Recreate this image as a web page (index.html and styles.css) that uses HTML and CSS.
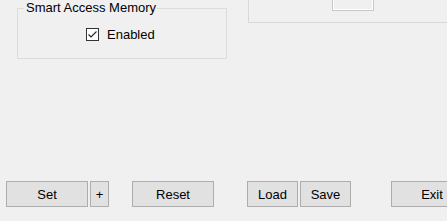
FILE: index.html
```html
<!DOCTYPE html>
<html>
	<head>
		<meta charset="utf-8">
		<title>Settings</title>
		<link rel="stylesheet" href="styles.css">
	</head>
	<body>
		<div class="window">
			<div class="toprow">
				<fieldset class="group">
					<legend>Smart Access Memory</legend>
					<label class="check">
						<span class="box">
							<svg width="11" height="11" viewBox="0 0 11 11"><path d="M1.5 5.5 L4 8 L9.5 2.5" fill="none" stroke="#222" stroke-width="1.1"/></svg>
						</span>
						<span>Enabled</span>
					</label>
				</fieldset>
				<div class="panel">
					<div class="slot"></div>
				</div>
			</div>
			<div class="buttons">
				<button class="btn wide">Set</button>
				<button class="btn plus">+</button>
				<button class="btn wide reset">Reset</button>
				<button class="btn small load">Load</button>
				<button class="btn small save">Save</button>
				<button class="btn wide exit">Exit</button>
			</div>
		</div>
	</body>
</html>
```

FILE: styles.css
```css
html, body {
	margin: 0;
	padding: 0;
	background-color: #f0f0f0;
	overflow: hidden;
}

.window {
	width: 447px;
	height: 221px;
	font-family: "Liberation Sans", Arial, sans-serif;
	font-size: 13px;
	color: #000;
	display: flex;
	flex-direction: column;
	overflow: hidden;
}

.toprow {
	display: flex;
	align-items: flex-start;
}

.group {
	margin: 0 0 0 17px;
	padding: 0;
	width: 208px;
	height: 57px;
	box-sizing: content-box;
	border: 1px solid #dcdcdc;
}

.group legend {
	margin-left: 6px;
	padding: 0 1px 0 2px;
	line-height: 16px;
}

.check {
	display: flex;
	align-items: center;
	margin: 11px 0 0 68px;
}

.box {
	width: 11px;
	height: 11px;
	border: 1px solid #333;
	background-color: #fff;
	display: flex;
}

.check span + span {
	margin-left: 8px;
}

.panel {
	margin-left: 21px;
	flex: 1;
	height: 22px;
	border-left: 1px solid #d9d9d9;
	border-bottom: 1px solid #d9d9d9;
	padding-left: 83px;
}

.slot {
	width: 40px;
	height: 10px;
	border: 1px solid #c8c8c8;
	border-top: none;
	box-shadow: inset 1px -1px 0 #fff, inset -1px 0 0 #fff;
}

.buttons {
	display: flex;
	margin-top: auto;
	margin-bottom: 14px;
	padding-left: 6px;
	white-space: nowrap;
	overflow: hidden;
}

.btn {
	height: 26px;
	margin: 0;
	padding: 0;
	border: 1px solid #adadad;
	background-color: #e1e1e1;
	font-family: inherit;
	font-size: 13px;
	color: #000;
	flex: none;
}

.wide { width: 82px; }
.plus { width: 19px; margin-left: 2px; }
.reset { margin-left: 23px; }
.small { width: 51px; }
.load { margin-left: 33px; }
.save { margin-left: 2px; }
.exit { margin-left: 40px; }
```
